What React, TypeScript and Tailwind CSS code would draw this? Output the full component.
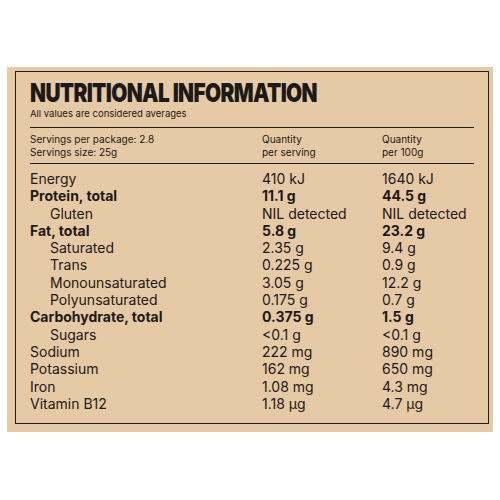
import React from "react";

type Row = { name: string; serving: string; per100: string; bold?: boolean; indent?: boolean };

const rows: Row[] = [
    { name: "Energy", serving: "410 kJ", per100: "1640 kJ" },
    { name: "Protein, total", serving: "11.1 g", per100: "44.5 g", bold: true },
    { name: "Gluten", serving: "NIL detected", per100: "NIL detected", indent: true },
    { name: "Fat, total", serving: "5.8 g", per100: "23.2 g", bold: true },
    { name: "Saturated", serving: "2.35 g", per100: "9.4 g", indent: true },
    { name: "Trans", serving: "0.225 g", per100: "0.9 g", indent: true },
    { name: "Monounsaturated", serving: "3.05 g", per100: "12.2 g", indent: true },
    { name: "Polyunsaturated", serving: "0.175 g", per100: "0.7 g", indent: true },
    { name: "Carbohydrate, total", serving: "0.375 g", per100: "1.5 g", bold: true },
    { name: "Sugars", serving: "<0.1 g", per100: "<0.1 g", indent: true },
    { name: "Sodium", serving: "222 mg", per100: "890 mg" },
    { name: "Potassium", serving: "162 mg", per100: "650 mg" },
    { name: "Iron", serving: "1.08 mg", per100: "4.3 mg" },
    { name: "Vitamin B12", serving: "1.18 µg", per100: "4.7 µg" },
];

export default function App() {
    return (
        <div className="w-[500px] h-[500px] bg-white pt-[67px] pl-[7px] font-['Inter',sans-serif] text-[#1c1a17]">
            <div className="w-[486px] h-[365px] bg-[#e6c9a5] pl-[8px] pt-[4px]">
                <div className="w-[474px] h-[353px] border-[1.5px] border-[#221e1a] pl-[14px] pr-[14px] pt-[8px]">
                    <h1 className="font-black text-[26px] leading-[26px] tracking-[-0.03em] uppercase whitespace-nowrap origin-left scale-x-[0.8]">
                        Nutritional Information
                    </h1>
                    <p className="text-[9.5px] leading-[12px] mt-[2px]">All values are considered averages</p>

                    <div className="border-t-[1.5px] border-[#221e1a] mt-[7px] pt-[5px] pb-[5px] grid grid-cols-[232px_120px_1fr] text-[10px] leading-[12.5px]">
                        <div>
                            <div>Servings per package: 2.8</div>
                            <div>Servings size: 25g</div>
                        </div>
                        <div>
                            <div>Quantity</div>
                            <div>per serving</div>
                        </div>
                        <div>
                            <div>Quantity</div>
                            <div>per 100g</div>
                        </div>
                    </div>

                    <div className="border-t-[1.5px] border-[#221e1a] pt-[6px] grid grid-cols-[232px_120px_1fr] text-[14px] leading-[17.3px]">
                        {rows.map((r) => (
                            <React.Fragment key={r.name}>
                                <div className={(r.bold ? "font-bold " : "") + (r.indent ? "pl-[20px]" : "")}>{r.name}</div>
                                <div className={r.bold ? "font-bold" : ""}>{r.serving}</div>
                                <div className={r.bold ? "font-bold" : ""}>{r.per100}</div>
                            </React.Fragment>
                        ))}
                    </div>
                </div>
            </div>
        </div>
    );
}
